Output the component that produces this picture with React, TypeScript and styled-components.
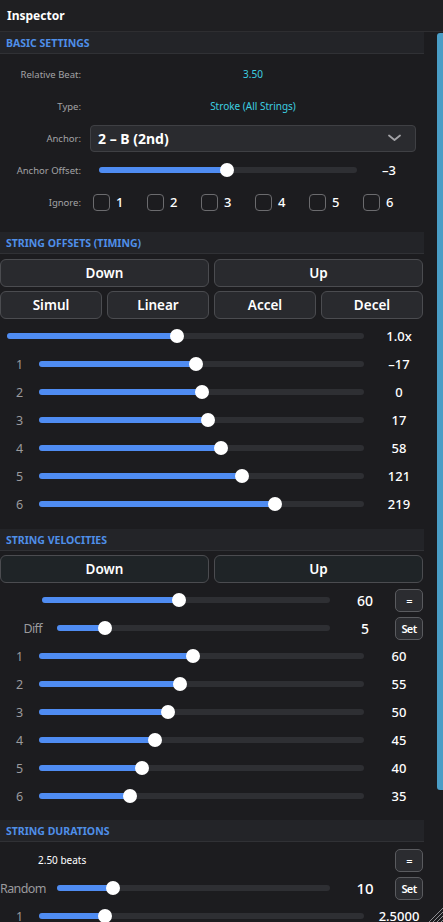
import React from 'react';
import styled, { createGlobalStyle } from 'styled-components';

const GlobalStyle = createGlobalStyle`
  html, body {
    margin: 0;
    padding: 0;
    background: #1c1c1f;
    overflow: hidden;
  }
  body {
    font-family: 'Noto Sans', 'DejaVu Sans', sans-serif;
    color: #ffffff;
  }
`;

const Window = styled.div`
  position: relative;
  width: 443px;
  height: 922px;
  overflow: hidden;
  background: #1c1c1f;
`;

const TitleBar = styled.div`
  height: 31px;
  display: flex;
  align-items: center;
  padding-left: 7px;
  background: #1f1f22;
  border-bottom: 1px solid #2e2e31;
  font-size: 12px;
  font-weight: 700;
`;

const Body = styled.div`
  display: flex;
`;

const Main = styled.div`
  width: 434px;
  flex: none;
`;

const ScrollTrack = styled.div`
  flex: 1;
  display: flex;
  justify-content: flex-end;
  padding-top: 1px;
`;

const ScrollThumb = styled.div`
  width: 6px;
  height: 757px;
  background: #4a9dc6;
  border-radius: 3px 0 0 3px;
`;

const SectionHeader = styled.div<{ $top?: number }>`
  box-sizing: border-box;
  height: 22px;
  margin: ${(p) => p.$top ?? 0}px 10px 0 0;
  padding-left: 6px;
  display: flex;
  align-items: center;
  background: #232428;
  border-bottom: 1px solid #303135;
  color: #4f8fe8;
  font-size: 10.5px;
  font-weight: 700;
`;

/* basic settings */
const BasicList = styled.div`
  padding: 4px 18px 0 0;
`;

const FieldRow = styled.div`
  height: 32px;
  display: grid;
  grid-template-columns: 81px 1fr;
  column-gap: 9px;
  align-items: center;
`;

const FieldLabel = styled.div`
  text-align: right;
  font-size: 9.5px;
  color: #a3a3a6;
`;

const InfoValue = styled.div`
  text-align: center;
  font-size: 10px;
  color: #3dcfe0;
`;

const Dropdown = styled.div`
  box-sizing: border-box;
  height: 27px;
  display: flex;
  align-items: center;
  justify-content: space-between;
  padding: 0 14px 0 7px;
  background: #2a2b2f;
  border: 1px solid #3f4044;
  border-radius: 4px;
  font-size: 14px;
  font-weight: 700;
`;

const OffsetControl = styled.div`
  display: flex;
  align-items: center;
  padding-left: 9px;
`;

const CheckGroup = styled.div`
  display: flex;
  align-items: center;
`;

const CheckItem = styled.div`
  width: 54px;
  display: flex;
  align-items: center;
  gap: 6px;
  padding-left: 3px;
  box-sizing: border-box;
  font-size: 13px;
  font-weight: 500;
`;

const CheckBox = styled.div`
  box-sizing: border-box;
  width: 17px;
  height: 17px;
  border: 1.5px solid #6b6b6e;
  border-radius: 4px;
`;

/* sliders */
const Track = styled.div`
  position: relative;
  flex: 1;
  height: 6px;
  border-radius: 3px;
  background: #2e2f33;
`;

const Fill = styled.div`
  height: 100%;
  border-radius: 3px;
  background: #4f8cf2;
`;

const Thumb = styled.div`
  position: absolute;
  top: 50%;
  width: 14px;
  height: 14px;
  margin: -7px 0 0 -7px;
  border-radius: 50%;
  background: #ffffff;
`;

const Value = styled.div<{ $size?: number; $width?: number; $pad?: number }>`
  box-sizing: border-box;
  width: ${(p) => p.$width ?? 70}px;
  padding-left: ${(p) => p.$pad ?? 0}px;
  flex: none;
  text-align: center;
  font-size: ${(p) => p.$size ?? 13}px;
  font-weight: 500;
  color: #ffffff;
`;

/* button grids */
const ButtonGrid = styled.div<{ $cols: number; $top: number }>`
  display: grid;
  grid-template-columns: repeat(${(p) => p.$cols}, 1fr);
  gap: 5px;
  margin: ${(p) => p.$top}px 11px 0 0;
`;

const WideButton = styled.div<{ $tone?: 'teal' }>`
  box-sizing: border-box;
  height: 28px;
  display: flex;
  align-items: center;
  justify-content: center;
  background: ${(p) => (p.$tone === 'teal' ? '#1f2427' : '#292a2e')};
  border: 1px solid #4b4c50;
  border-radius: 6px;
  font-size: 13.5px;
  font-weight: 600;
`;

const SmallButton = styled.div`
  box-sizing: border-box;
  width: 28px;
  height: 23px;
  display: flex;
  align-items: center;
  justify-content: center;
  background: #2b2c30;
  border: 1px solid #5a5b5f;
  border-radius: 5px;
  font-size: 11px;
  font-weight: 600;
  letter-spacing: -0.6px;
`;

/* string rows */
const StringRow = styled.div<{ $label: number; $top?: number }>`
  height: 28px;
  margin-top: ${(p) => p.$top ?? 0}px;
  display: grid;
  grid-template-columns: ${(p) => p.$label}px 1fr 70px;
  align-items: center;
`;

const RowNum = styled.div`
  text-align: center;
  font-size: 12.5px;
  color: #9a9a9d;
`;

const ToolRow = styled.div<{ $label: number; $top?: number }>`
  height: 28px;
  margin-top: ${(p) => p.$top ?? 0}px;
  padding-right: 11px;
  display: grid;
  grid-template-columns: ${(p) => p.$label}px 1fr 65px 28px;
  align-items: center;
`;

const ToolLabel = styled.div`
  text-align: right;
  padding-right: 15px;
  font-size: 12.5px;
  color: #9a9a9d;
  letter-spacing: -0.6px;
  white-space: nowrap;
`;

const BeatsRow = styled.div`
  height: 28px;
  margin-top: 4px;
  padding: 0 11px 0 38px;
  display: grid;
  grid-template-columns: 1fr 28px;
  align-items: center;
  font-size: 10px;
`;

const Grip = styled.svg`
  position: absolute;
  right: 0;
  bottom: 0;
`;

function Slider({ pct }: { pct: number }) {
  return (
    <Track>
      <Fill style={{ width: `${pct}%` }} />
      <Thumb style={{ left: `${pct}%` }} />
    </Track>
  );
}

const offsets = [
  { n: 1, pct: 48.3, v: '–17' },
  { n: 2, pct: 50.2, v: '0' },
  { n: 3, pct: 52.0, v: '17' },
  { n: 4, pct: 56.0, v: '58' },
  { n: 5, pct: 62.5, v: '121' },
  { n: 6, pct: 72.6, v: '219' },
];

const velocities = [
  { n: 1, pct: 47.4, v: '60' },
  { n: 2, pct: 43.4, v: '55' },
  { n: 3, pct: 39.7, v: '50' },
  { n: 4, pct: 35.7, v: '45' },
  { n: 5, pct: 31.7, v: '40' },
  { n: 6, pct: 28.0, v: '35' },
];

export default function App() {
  return (
    <Window>
      <GlobalStyle />
      <TitleBar>Inspector</TitleBar>
      <Body>
        <Main>
          <SectionHeader>BASIC SETTINGS</SectionHeader>
          <BasicList>
            <FieldRow>
              <FieldLabel>Relative Beat:</FieldLabel>
              <InfoValue>3.50</InfoValue>
            </FieldRow>
            <FieldRow>
              <FieldLabel>Type:</FieldLabel>
              <InfoValue>Stroke (All Strings)</InfoValue>
            </FieldRow>
            <FieldRow>
              <FieldLabel>Anchor:</FieldLabel>
              <Dropdown>
                <span>2 – B (2nd)</span>
                <svg width="13" height="8" viewBox="0 0 13 8">
                  <path d="M1 1.5 L6.5 6 L12 1.5" fill="none" stroke="#a2a2a6" strokeWidth="1.8" strokeLinecap="round" strokeLinejoin="round" />
                </svg>
              </Dropdown>
            </FieldRow>
            <FieldRow>
              <FieldLabel>Anchor Offset:</FieldLabel>
              <OffsetControl>
                <Slider pct={49.6} />
                <Value $width={59} $pad={5}>–3</Value>
              </OffsetControl>
            </FieldRow>
            <FieldRow>
              <FieldLabel>Ignore:</FieldLabel>
              <CheckGroup>
                {[1, 2, 3, 4, 5, 6].map((n) => (
                  <CheckItem key={n}>
                    <CheckBox />
                    {n}
                  </CheckItem>
                ))}
              </CheckGroup>
            </FieldRow>
          </BasicList>

          <SectionHeader $top={14}>STRING OFFSETS (TIMING)</SectionHeader>
          <ButtonGrid $cols={2} $top={5}>
            <WideButton>Down</WideButton>
            <WideButton>Up</WideButton>
          </ButtonGrid>
          <ButtonGrid $cols={4} $top={4}>
            <WideButton>Simul</WideButton>
            <WideButton>Linear</WideButton>
            <WideButton>Accel</WideButton>
            <WideButton>Decel</WideButton>
          </ButtonGrid>
          <StringRow $label={7} $top={3}>
            <span />
            <Slider pct={47.6} />
            <Value>1.0x</Value>
          </StringRow>
          {offsets.map((r) => (
            <StringRow key={r.n} $label={39}>
              <RowNum>{r.n}</RowNum>
              <Slider pct={r.pct} />
              <Value>{r.v}</Value>
            </StringRow>
          ))}

          <SectionHeader $top={11}>STRING VELOCITIES</SectionHeader>
          <ButtonGrid $cols={2} $top={4}>
            <WideButton $tone="teal">Down</WideButton>
            <WideButton $tone="teal">Up</WideButton>
          </ButtonGrid>
          <ToolRow $label={42} $top={3}>
            <span />
            <Slider pct={47.6} />
            <Value $width={65} $pad={5} $size={14}>60</Value>
            <SmallButton>=</SmallButton>
          </ToolRow>
          <ToolRow $label={57}>
            <ToolLabel>Diff</ToolLabel>
            <Slider pct={17.6} />
            <Value $width={65} $pad={5} $size={14}>5</Value>
            <SmallButton>Set</SmallButton>
          </ToolRow>
          {velocities.map((r) => (
            <StringRow key={r.n} $label={39}>
              <RowNum>{r.n}</RowNum>
              <Slider pct={r.pct} />
              <Value>{r.v}</Value>
            </StringRow>
          ))}

          <SectionHeader $top={10}>STRING DURATIONS</SectionHeader>
          <BeatsRow>
            <span>2.50 beats</span>
            <SmallButton>=</SmallButton>
          </BeatsRow>
          <ToolRow $label={57}>
            <ToolLabel>Random</ToolLabel>
            <Slider pct={20.5} />
            <Value $width={65} $pad={5} $size={15}>10</Value>
            <SmallButton>Set</SmallButton>
          </ToolRow>
          <StringRow $label={39}>
            <RowNum>1</RowNum>
            <Slider pct={20.3} />
            <Value>2.5000</Value>
          </StringRow>
        </Main>
        <ScrollTrack>
          <ScrollThumb />
        </ScrollTrack>
      </Body>
      <Grip width="16" height="16" viewBox="0 0 16 16">
        <path d="M16 2 L2 16 M16 6 L6 16 M16 10 L10 16 M16 14 L14 16" stroke="#8e8e92" strokeWidth="1" />
      </Grip>
    </Window>
  );
}
